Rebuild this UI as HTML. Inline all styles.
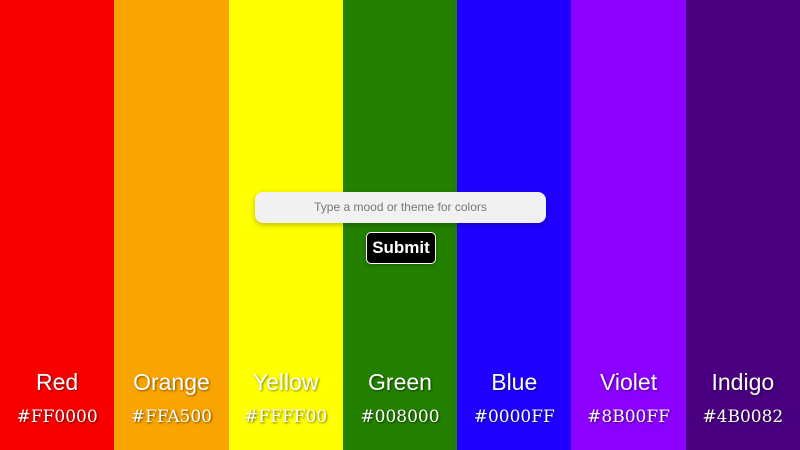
<!DOCTYPE html>
<html><head><style>
body{margin:0;width:800px;height:450px;overflow:hidden;position:relative;font-family:"Liberation Sans",sans-serif}
.row{display:flex;height:450px}
.c{flex:1;position:relative}
.n{position:absolute;top:369px;left:0;right:0;text-align:center;color:#fff;font-size:23px;text-shadow:1px 1px 2px rgba(0,0,0,.5)}
.h{position:absolute;top:407px;left:0;right:0;text-align:center;color:#fff;font-family:"DejaVu Serif",serif;font-size:17px;text-shadow:1px 1px 2px rgba(0,0,0,.6)}
.in{position:absolute;left:255px;top:192px;width:291px;height:31px;background:#f1f1f1;border-radius:8px;box-shadow:0 2px 6px rgba(0,0,0,.25);text-align:center;line-height:31px;font-size:12px;color:#777}
.b{position:absolute;left:366px;top:232px;width:68px;height:30px;background:#000;border:1px solid #fff;border-radius:5px;color:#fff;font-size:17px;font-weight:bold;text-align:center;line-height:30px;box-shadow:0 1px 4px rgba(0,0,0,.3)}
</style></head><body>
<div class="row">
<div class="c" style="background:#f80000"><div class="n">Red</div><div class="h">#FF0000</div></div>
<div class="c" style="background:#f9a400"><div class="n">Orange</div><div class="h">#FFA500</div></div>
<div class="c" style="background:#ffff00"><div class="n">Yellow</div><div class="h">#FFFF00</div></div>
<div class="c" style="background:#237f00"><div class="n">Green</div><div class="h">#008000</div></div>
<div class="c" style="background:#1f00ff"><div class="n">Blue</div><div class="h">#0000FF</div></div>
<div class="c" style="background:#8c00ff"><div class="n">Violet</div><div class="h">#8B00FF</div></div>
<div class="c" style="background:#4a0080"><div class="n">Indigo</div><div class="h">#4B0082</div></div>
</div>
<div class="in">Type a mood or theme for colors</div>
<div class="b">Submit</div>
</body></html>
